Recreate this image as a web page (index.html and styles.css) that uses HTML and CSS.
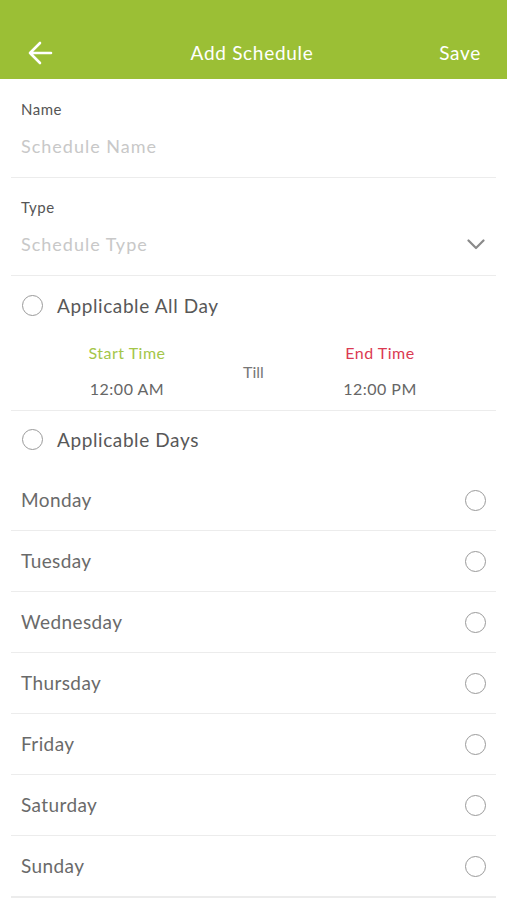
FILE: index.html
```html
<!DOCTYPE html>
<html>
<head>
    <title>Add Schedule</title>
    <link rel="stylesheet" href="styles.css">
</head>
<body>
    <div class="topbar">
        <span class="back">
            <svg width="26" height="24" viewBox="0 0 26 24"><path d="M24 12H3M13 2L3 12l10 10" fill="none" stroke="#fff" stroke-width="2.6" stroke-linecap="round" stroke-linejoin="round"/></svg>
        </span>
        <span class="title">Add Schedule</span>
        <span class="save">Save</span>
    </div>

    <div class="form">
        <div class="field">
            <div class="label">Name</div>
            <div class="placeholder">Schedule Name</div>
        </div>
        <div class="field">
            <div class="label">Type</div>
            <div class="select">
                <span class="placeholder">Schedule Type</span>
                <svg width="18" height="11" viewBox="0 0 18 11"><path d="M1.5 1.5L9 9l7.5-7.5" fill="none" stroke="#8a8a8a" stroke-width="2.2" stroke-linecap="round" stroke-linejoin="round"/></svg>
            </div>
        </div>

        <div class="option">
            <span class="radio"></span>
            <span>Applicable All Day</span>
        </div>
        <div class="times">
            <div class="time">
                <div class="start">Start Time</div>
                <div class="value">12:00 AM</div>
            </div>
            <div class="till">Till</div>
            <div class="time">
                <div class="end">End Time</div>
                <div class="value">12:00 PM</div>
            </div>
        </div>

        <div class="option days-head">
            <span class="radio"></span>
            <span>Applicable Days</span>
        </div>
        <div class="day"><span>Monday</span><span class="radio"></span></div>
        <div class="day"><span>Tuesday</span><span class="radio"></span></div>
        <div class="day"><span>Wednesday</span><span class="radio"></span></div>
        <div class="day"><span>Thursday</span><span class="radio"></span></div>
        <div class="day"><span>Friday</span><span class="radio"></span></div>
        <div class="day"><span>Saturday</span><span class="radio"></span></div>
        <div class="day"><span>Sunday</span><span class="radio"></span></div>
    </div>
</body>
</html>
```

FILE: styles.css
```css
body {
    margin: 0;
    font-family: Lato, "Noto Sans", sans-serif;
    background: #fff;
    color: #555;
}

.topbar {
    height: 53px;
    padding-top: 26px;
    background-color: #9bbf35;
    display: flex;
    align-items: center;
    justify-content: space-between;
    padding-left: 27px;
    padding-right: 26px;
    color: #fff;
    font-size: 19px;
    letter-spacing: 0.7px;
}

.back {
    display: flex;
    width: 60px;
}

.title {
    flex: 1;
    text-align: center;
    margin-right: 20px;
}

.save {
    width: 44px;
    text-align: right;
}

.form {
    padding: 0 11px;
}

.field {
    padding: 20px 10px 19px;
    border-bottom: 1px solid #ececec;
}

.field + .field {
    padding-top: 19px;
}

.label {
    font-size: 15px;
    line-height: 20px;
    letter-spacing: 0.5px;
    color: #555;
}

.placeholder {
    font-size: 18px;
    line-height: 24px;
    letter-spacing: 1px;
    color: #c8c8c8;
    margin-top: 15px;
}

.select {
    display: flex;
    align-items: center;
    justify-content: space-between;
    margin-top: 15px;
    padding-right: 1px;
}

.select .placeholder {
    margin-top: 0;
}

.radio {
    width: 19px;
    height: 19px;
    border: 1.5px solid #9a9a9a;
    border-radius: 50%;
    flex-shrink: 0;
}

.option {
    height: 58px;
    padding: 0 11px 2px;
    display: flex;
    align-items: center;
    gap: 14px;
    font-size: 19px;
    letter-spacing: 0.6px;
    color: #585858;
}

.days-head {
    height: 57px;
}

.times {
    display: flex;
    align-items: center;
    padding: 7px 0 11px;
    border-bottom: 1px solid #ececec;
}

.time {
    width: 232px;
    text-align: center;
    font-size: 16px;
    line-height: 20px;
    letter-spacing: 0.5px;
}

.time .value {
    margin-top: 16px;
    color: #666;
}

.start {
    color: #a4c648;
}

.end {
    color: #db3a52;
}

.till {
    width: 21px;
    text-align: center;
    font-size: 16px;
    color: #777;
}

.day {
    height: 59px;
    padding: 0 10px 1px;
    display: flex;
    align-items: center;
    justify-content: space-between;
    border-bottom: 1px solid #ececec;
    font-size: 19px;
    letter-spacing: 0.4px;
    color: #6a6a6a;
}

.day .radio {
    margin-top: 1px;
}

.day:last-child {
    border-bottom: 2px solid #ececec;
}
```
